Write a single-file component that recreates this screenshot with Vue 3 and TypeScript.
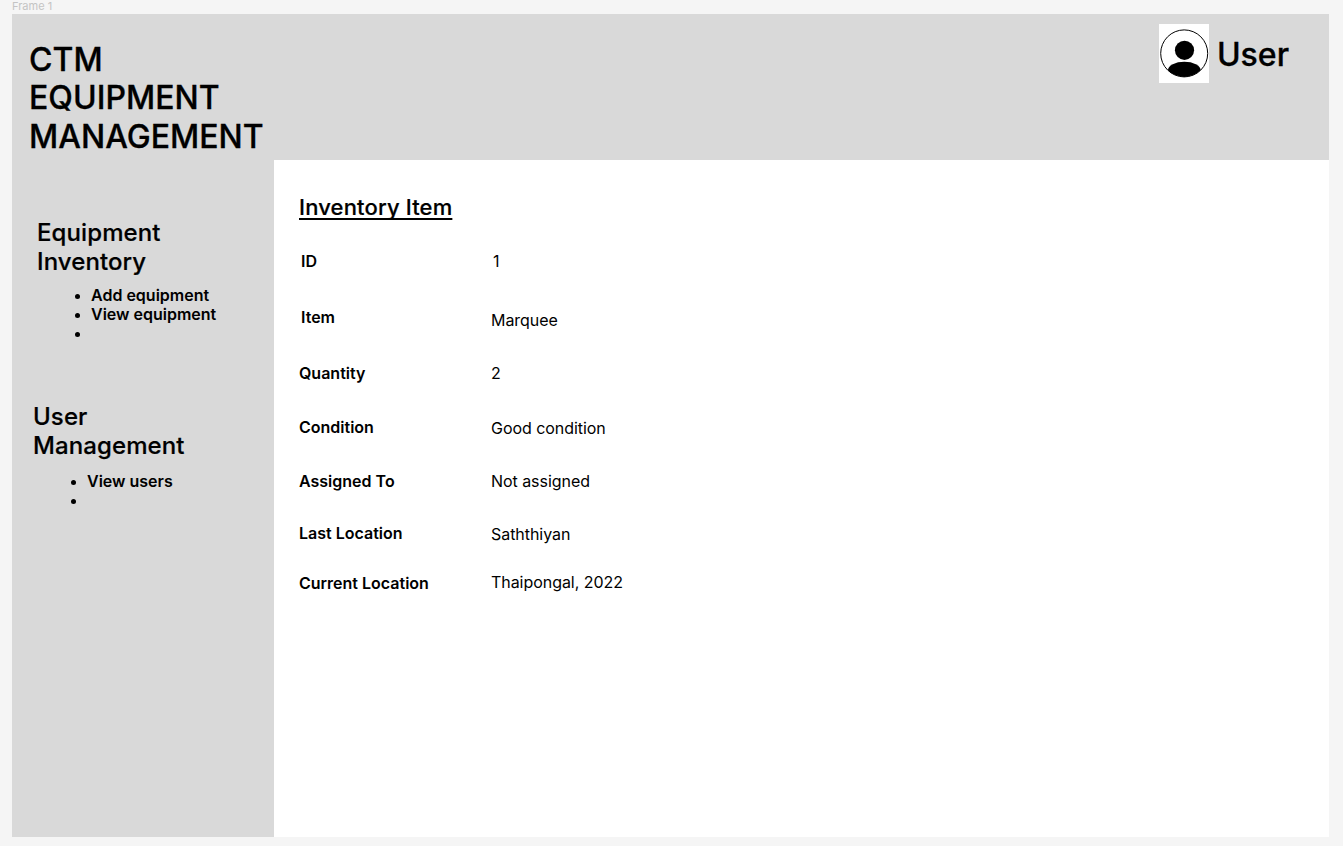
<script setup lang="ts">
interface DetailRow {
  key: string
  label: string
  value: string
}

const rows: DetailRow[] = [
  { key: 'id', label: 'ID', value: '1' },
  { key: 'item', label: 'Item', value: 'Marquee' },
  { key: 'quantity', label: 'Quantity', value: '2' },
  { key: 'condition', label: 'Condition', value: 'Good condition' },
  { key: 'assigned', label: 'Assigned To', value: 'Not assigned' },
  { key: 'last', label: 'Last Location', value: 'Saththiyan' },
  { key: 'current', label: 'Current Location', value: 'Thaipongal, 2022' }
]

const equipmentLinks = ['Add equipment', 'View equipment', '']
const userLinks = ['View users', '']
</script>

<template>
  <div class="canvas">
    <div class="frame-name">Frame 1</div>
    <div class="frame">
      <header class="topbar">
        <h1 class="brand">CTM<br />EQUIPMENT<br />MANAGEMENT</h1>
        <div class="user">
          <div class="avatar">
            <svg width="50" height="59" viewBox="0 0 50 59">
              <defs>
                <clipPath id="avatar-clip">
                  <circle cx="25.2" cy="29.4" r="23.5" />
                </clipPath>
              </defs>
              <circle cx="25.5" cy="26.3" r="9.6" fill="#000" />
              <ellipse cx="25.3" cy="46.2" rx="16.3" ry="8.5" fill="#000" clip-path="url(#avatar-clip)" />
              <circle cx="25.2" cy="29.4" r="23.5" fill="none" stroke="#000" stroke-width="1" />
            </svg>
          </div>
          <span class="user-name">User</span>
        </div>
      </header>

      <aside class="sidebar">
        <section class="nav-group equipment">
          <h2>Equipment<br />Inventory</h2>
          <ul>
            <li v-for="(link, i) in equipmentLinks" :key="i">{{ link || '\u00a0' }}</li>
          </ul>
        </section>
        <section class="nav-group users">
          <h2>User<br />Management</h2>
          <ul>
            <li v-for="(link, i) in userLinks" :key="i">{{ link || '\u00a0' }}</li>
          </ul>
        </section>
      </aside>

      <main class="content">
        <h2 class="content-title">Inventory Item</h2>
        <div class="details">
          <template v-for="row in rows" :key="row.key">
            <div class="label" :class="`label-${row.key}`">{{ row.label }}</div>
            <div class="value" :class="`value-${row.key}`">{{ row.value }}</div>
          </template>
        </div>
      </main>
    </div>
  </div>
</template>

<style>
html,
body {
  margin: 0;
  background: #f5f5f5;
}
</style>

<style scoped>
.canvas {
  position: relative;
  height: 846px;
  padding: 14px 14px 9px 12px;
  box-sizing: border-box;
  overflow: hidden;
  background: #f5f5f5;
  font-family: Inter, "Liberation Sans", sans-serif;
  color: #000;
}

.frame-name {
  position: absolute;
  left: 12px;
  top: 0;
  font-size: 11px;
  line-height: 13px;
  color: #c4c4c4;
}

.frame {
  display: grid;
  grid-template-columns: 262px 1fr;
  grid-template-rows: 146px 1fr;
  height: 100%;
  background: #d9d9d9;
}

.topbar {
  grid-column: 1 / 3;
  display: flex;
  justify-content: space-between;
  align-items: flex-start;
}

.brand {
  margin: 26.5px 0 0 17px;
  font-size: 32px;
  line-height: 38.7px;
  font-weight: 500;
  letter-spacing: 0.03px;
  -webkit-text-stroke: 0.3px #000;
}

.user {
  display: flex;
  align-items: center;
  gap: 8px;
  margin: 10px 40px 0 0;
}

.avatar {
  width: 50px;
  height: 59px;
  background: #fff;
}

.avatar svg {
  display: block;
}

.user-name {
  padding-top: 2px;
  font-size: 32px;
  font-weight: 500;
  line-height: 39px;
  -webkit-text-stroke: 0.3px #000;
}

.sidebar {
  padding-top: 58px;
}

.nav-group h2 {
  margin: 0 0 10px;
  font-size: 24px;
  line-height: 29px;
  font-weight: 500;
  letter-spacing: 0.1px;
  -webkit-text-stroke: 0.2px #000;
}

.nav-group ul {
  margin: 0;
  padding-left: 54px;
  font-size: 16px;
  line-height: 19px;
  font-weight: 600;
}

.nav-group li::marker {
  font-size: 14px;
}

.equipment {
  padding-left: 25px;
}

.users {
  margin-top: 59px;
  padding-left: 21px;
}

.users h2 {
  margin-bottom: 12px;
}

.content {
  padding: 33px 0 0 25px;
  background: #fff;
}

.content-title {
  margin: 0 0 31px;
  font-size: 22px;
  line-height: 28px;
  font-weight: 500;
  letter-spacing: 0.15px;
  -webkit-text-stroke: 0.2px #000;
  text-decoration: underline;
  text-decoration-thickness: 1.5px;
  text-decoration-skip-ink: none;
  text-underline-offset: 3px;
}

.details {
  display: grid;
  grid-template-columns: 192px 1fr;
  grid-template-rows: 56px 56px 54px 54px 52px 49px auto;
  font-size: 16px;
  line-height: 19px;
}

.label {
  font-weight: 600;
}

.value {
  font-weight: 400;
  letter-spacing: -0.05px;
}

.label-id,
.label-item,
.value-id {
  padding-left: 2px;
}

.value-item {
  padding-top: 3px;
}

.value-condition,
.value-last,
.label-current {
  padding-top: 1px;
}
</style>
